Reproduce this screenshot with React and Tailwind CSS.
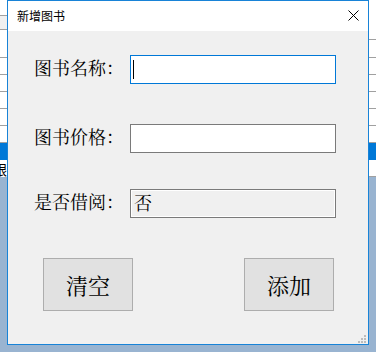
import React from "react";

const CJK = { fontFamily: '"Noto Serif CJK SC", "Noto Sans CJK SC", serif' };

function Strip({ top }) {
  return (
    <div className="w-[7px] flex flex-col bg-[#99b4d1] overflow-hidden">
      {top}
      <div className="h-[17px] bg-white border-b border-[#a0a0a0]" />
      <div className="h-[17px] bg-white border-b border-[#a0a0a0]" />
      <div className="h-[17px] bg-white border-b border-[#a0a0a0]" />
      <div className="h-[17px] bg-white border-b border-[#a0a0a0]" />
      <div className="h-[17px] bg-white border-b border-[#a0a0a0]" />
      <div className="h-[17px] bg-[#0078d7]" />
      <div className="h-[17px] bg-white border-b border-[#a0a0a0] flex justify-end overflow-hidden">
        {null}
      </div>
    </div>
  );
}

function Row({ label, children }) {
  return (
    <div className="flex items-center">
      <div
        className="w-[96px] text-[18px] leading-[18px] text-black mb-[5px] whitespace-nowrap"
        style={CJK}
      >
        {label}
      </div>
      {children}
    </div>
  );
}

export default function App() {
  const leftTop = (
    <>
      <div className="h-[16px] bg-white border-b border-[#a0a0a0]" />
      <div className="h-[14px] bg-[#f0f0f0] border-b border-[#a0a0a0]" />
      <div className="h-[28px] bg-white border-b border-[#a0a0a0]" />
    </>
  );
  const rightTop = (
    <>
      <div className="h-[40px] bg-white border-b border-[#a0a0a0]" />
      <div className="h-[18px] bg-white border-b border-[#a0a0a0]" />
    </>
  );
  return (
    <div className="w-[376px] h-[352px] overflow-hidden flex flex-col bg-[#99b4d1]">
      <div className="flex h-[345px] shrink-0">
        <div className="w-[7px] flex flex-col bg-[#99b4d1] overflow-hidden">
          {leftTop}
          <div className="h-[17px] bg-white border-b border-[#a0a0a0]" />
          <div className="h-[17px] bg-white border-b border-[#a0a0a0]" />
          <div className="h-[17px] bg-white border-b border-[#a0a0a0]" />
          <div className="h-[17px] bg-white border-b border-[#a0a0a0]" />
          <div className="h-[17px] bg-white border-b border-[#a0a0a0]" />
          <div className="h-[17px] bg-[#0078d7]" />
          <div className="h-[17px] bg-white flex justify-end items-center overflow-hidden">
            <span
              className="text-[14px] leading-[14px] text-black whitespace-nowrap"
              style={{ fontFamily: '"Noto Sans CJK SC", sans-serif' }}
            >
              跟
            </span>
          </div>
        </div>

        <div className="w-[362px] border border-[#1883d7] flex flex-col bg-[#f0f0f0]">
          <div className="h-[30px] bg-white flex items-center justify-between pl-[9px] pr-[9px] shrink-0">
            <span
              className="text-[12px] leading-[12px] text-black"
              style={{ fontFamily: '"Noto Sans CJK SC", sans-serif' }}
            >
              新增图书
            </span>
            <svg width="11" height="11" viewBox="0 0 11 11" className="mb-[1px]">
              <path d="M0.5 0.5 L10.5 10.5 M10.5 0.5 L0.5 10.5" stroke="#000" strokeWidth="1" fill="none" />
            </svg>
          </div>

          <div className="relative flex-1 flex flex-col pl-[26px] pt-[24px]">
            <Row label="图书名称：">
              <div className="w-[206px] h-[29px] border border-[#0078d7] bg-white flex items-center pl-[2px]">
                <span className="w-px h-[19px] bg-black" />
              </div>
            </Row>
            <div className="mt-[40px]">
              <Row label="图书价格：">
                <div className="w-[206px] h-[29px] border border-[#7a7a7a] bg-white" />
              </Row>
            </div>
            <div className="mt-[36px]">
              <Row label="是否借阅：">
                <div className="w-[206px] h-[29px] border border-[#7a7a7a] bg-[#f0f0f0] shadow-[inset_0_0_0_1px_#ffffff] flex items-center pl-[3px]">
                  <span className="text-[18px] leading-[18px] text-black mb-[3px]" style={CJK}>
                    否
                  </span>
                </div>
              </Row>
            </div>

            <div className="mt-[40px] flex gap-[111px] pl-[9px]">
              <button
                className="w-[90px] h-[53px] bg-[#e1e1e1] border border-[#adadad] flex items-center justify-center text-[22px] leading-[22px] text-black"
                style={CJK}
              >
                清空
              </button>
              <button
                className="w-[90px] h-[53px] bg-[#e1e1e1] border border-[#adadad] flex items-center justify-center text-[22px] leading-[22px] text-black"
                style={CJK}
              >
                添加
              </button>
            </div>

            <svg width="8" height="8" viewBox="0 0 8 8" className="absolute right-[2px] bottom-[1px]">
              <rect x="6" y="0" width="2" height="2" fill="#bcbcbc" />
              <rect x="3" y="3" width="2" height="2" fill="#bcbcbc" />
              <rect x="6" y="3" width="2" height="2" fill="#bcbcbc" />
              <rect x="0" y="6" width="2" height="2" fill="#bcbcbc" />
              <rect x="3" y="6" width="2" height="2" fill="#bcbcbc" />
              <rect x="6" y="6" width="2" height="2" fill="#bcbcbc" />
            </svg>
          </div>
        </div>

        <div className="w-[7px] flex flex-col bg-[#99b4d1] overflow-hidden">
          {rightTop}
          <div className="h-[17px] bg-white border-b border-[#a0a0a0]" />
          <div className="h-[17px] bg-white border-b border-[#a0a0a0]" />
          <div className="h-[17px] bg-white border-b border-[#a0a0a0]" />
          <div className="h-[17px] bg-white border-b border-[#a0a0a0]" />
          <div className="h-[17px] bg-white border-b border-[#a0a0a0]" />
          <div className="h-[17px] bg-[#0078d7]" />
          <div className="h-[17px] bg-white border-b border-[#a0a0a0]" />
        </div>
      </div>
    </div>
  );
}
